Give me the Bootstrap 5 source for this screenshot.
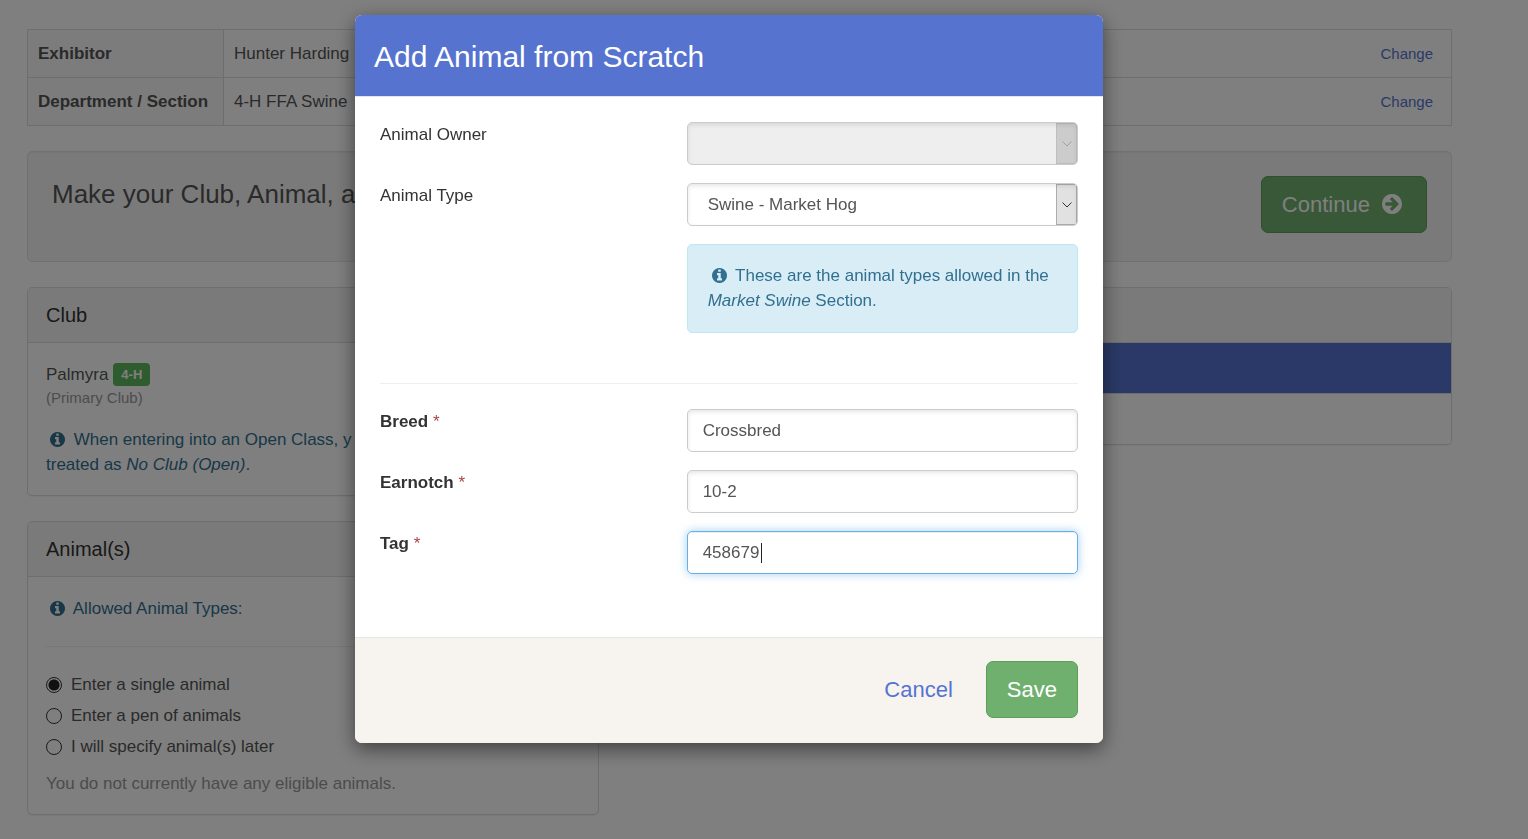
<!DOCTYPE html>
<html lang="en">
<head>
<meta charset="utf-8">
<meta name="viewport" content="width=device-width, initial-scale=1">
<title>Add Animal from Scratch</title>
<link href="https://cdn.jsdelivr.net/npm/bootstrap@5.3.0/dist/css/bootstrap.min.css" rel="stylesheet">
<style>
  :root { --brand: #5673d0; --line: #ddd; --info-ink: #31708f; }
  body { font-family: "Liberation Sans", Arial, sans-serif; font-size: 17px; line-height: 25px; color: #555; background: #fff; }
  a, .btn-link { color: var(--brand); text-decoration: none; }
  .page { padding: 29px 76px 24px 27px; }
  .row { --bs-gutter-x: 38px; }

  /* entry summary */
  .summary { --bs-table-color: #555; margin-bottom: 25px; border-color: var(--line); }
  .summary th, .summary td { padding: 11px 10px; vertical-align: middle; border-color: var(--line); white-space: nowrap; }
  .summary th { width: 196px; background: #f8f8f8; }
  .summary a { font-size: 15px; padding-right: 8px; }

  .well { margin-bottom: 25px; padding: 24px 24px 28px; border: 1px solid #e3e3e3; border-radius: 5px; background: #f5f5f5; box-shadow: inset 0 1px 1px rgba(0,0,0,.05); }
  .well h2 { margin: 0; font-size: 26px; line-height: 36px; }

  /* panels */
  .card { --bs-card-border-color: var(--line); --bs-card-border-radius: 5px; --bs-card-inner-border-radius: 4px; margin-bottom: 25px; box-shadow: 0 1px 1px rgba(0,0,0,.05); }
  .card-header { padding: 16px 18px; background: #f5f5f5; border-bottom-color: var(--line); color: #333; }
  .card-header h3 { margin: 0; min-height: 22px; font-size: 20px; line-height: 22px; }
  .card-body { padding: 19px 18px 18px; color: #555; }
  .list-group-item { min-height: 50px; border-color: var(--line); }
  .list-group-item.active { min-height: 51px; background: var(--brand); border-color: var(--line); margin-top: 0; }
  .card > .list-group { border-top: 0; }
  .club-name { display: flex; align-items: center; gap: 5px; height: 25px; }
  .club-badge { font-size: 13px; line-height: 13px; padding: 5px 8px; border-radius: 4px; background: #5cb85c; }
  .club-note { font-size: 15px; line-height: 22px; margin-bottom: 18px; color: #999; }
  .hint { color: var(--info-ink); }
  .hint svg { width: 15px; height: 15px; margin: 0 4px; vertical-align: -2px; }
  .rule { margin: 25px 0; border: 0; border-top: 1px solid #eee; opacity: 1; }
  .choice { display: flex; align-items: center; gap: 9px; margin-bottom: 6px; }
  .choice input { appearance: none; width: 16px; height: 16px; margin: 0; border: 1px solid #333; border-radius: 50%; background: #fff; }
  .choice input:checked { background: radial-gradient(circle, #222 5px, #fff 6px); }
  .none-note { margin: 12px 0 0; color: #999; }

  /* large buttons */
  .btn-lg { padding: 12px 20px; font-size: 22px; line-height: 31px; border-radius: 7px; }
  .btn-go { color: #fff; background: #70b06f; border: 1px solid #5a9e58; }
  .btn-go:hover { color: #fff; background: #5fa35e; }
  .btn-go svg { width: 20px; height: 20px; margin: 0 4px 0 6px; vertical-align: -2px; }

  /* dialog */
  .modal { padding-right: 70px; }
  .modal-dialog { max-width: 748px; margin-top: 15px; }
  .modal-content { border: 0; border-radius: 7px; box-shadow: 0 6px 19px rgba(0,0,0,.5); color: #333; }
  .modal-header { padding: 20px 19px 18px; background: var(--brand); border-bottom: 1px solid #e5e5e5; border-radius: 7px 7px 0 0; }
  .modal-title { font-size: 30px; line-height: 43px; color: #fff; }
  .modal-body { padding: 25px 25px 63px; }
  .modal-footer { padding: 23px 25px 25px; gap: 12px; background: #f7f3ee; border-top: 1px solid #e5e5e5; border-radius: 0 0 7px 7px; }
  .modal-footer > * { margin: 0; }
  .field { margin-bottom: 18px; }
  .field:last-child { margin-bottom: 0; }
  .required { color: #a94442; font-weight: 400; }
  .form-control, .form-select { height: 43px; padding: 8px 15px; border: 1px solid #ccc; border-radius: 5px; font-size: 17px; line-height: 25px; color: #555; box-shadow: inset 0 2px 4px rgba(0,0,0,.1); }
  .form-select { padding: 8px 30px 8px 20px; background-position: right center; background-size: 21px 41px;
    background-image: url("data:image/svg+xml,%3Csvg xmlns='http://www.w3.org/2000/svg' viewBox='0 0 21 41'%3E%3Crect x='.5' y='.5' width='20' height='40' fill='%23e1e1e1' stroke='%23adadad'/%3E%3Cpath d='M6.500 18.500l4.500 4.500 4.500-4.500' fill='none' stroke='%23333'/%3E%3C/svg%3E"); }
  .form-select:disabled { background-color: #eee; opacity: 1;
    background-image: url("data:image/svg+xml,%3Csvg xmlns='http://www.w3.org/2000/svg' viewBox='0 0 21 41'%3E%3Crect x='.5' y='.5' width='20' height='40' fill='%23ccc' stroke='%23bfbfbf'/%3E%3Cpath d='M6.500 18.500l4.500 4.500 4.500-4.500' fill='none' stroke='%23a0a0a0'/%3E%3C/svg%3E"); }
  .editing { border-color: #66afe9; box-shadow: inset 0 1px 1px rgba(0,0,0,.075), 0 0 10px rgba(102,175,233,.6);
    background: linear-gradient(#222, #222) 73px center / 1px 20px no-repeat #fff; }
  .alert-types { margin: 0; padding: 18px 20px 19px; border: 1px solid #bce8f1; border-radius: 5px; background: #d9edf7; }
  .dialog-rule { margin: 50px 0 25px; }
</style>
</head>
<body class="modal-open overflow-hidden">
<svg class="d-none" aria-hidden="true">
  <symbol id="info" viewBox="0 128 1536 1536"><path fill="currentColor" d="M1024 1376v-160q0-14-9-23t-23-9h-96V672q0-14-9-23t-23-9H544q-14 0-23 9t-9 23v160q0 14 9 23t23 9h96v320h-96q-14 0-23 9t-9 23v160q0 14 9 23t23 9h448q14 0 23-9t9-23zM896 480V320q0-14-9-23t-23-9H672q-14 0-23 9t-9 23v160q0 14 9 23t23 9h192q14 0 23-9t9-23zm640 416q0 209-103 385.500T1153.500 1561 768 1664t-385.500-103T103 1281.500 0 896t103-385.500T382.500 231 768 128t385.500 103T1433 510.500 1536 896z"/></symbol>
  <symbol id="arrow" viewBox="0 128 1536 1536"><path fill="currentColor" d="M1285 896q0-27-18-45l-91-91-362-362q-18-18-45-18t-45 18l-91 91q-18 18-18 45t18 45l189 189H320q-26 0-45 19t-19 45v128q0 26 19 45t45 19h502l-189 189q-19 19-19 45t19 45l91 91q18 18 45 18t45-18l362-362 91-91q18-18 18-45zm251 0q0 209-103 385.500T1153.500 1561 768 1664t-385.500-103T103 1281.500 0 896t103-385.500T382.500 231 768 128t385.500 103T1433 510.500 1536 896z"/></symbol>
</svg>

<main class="page container-fluid">
  <table class="table table-bordered summary">
    <tbody>
      <tr><th scope="row">Exhibitor</th><td class="border-end-0">Hunter Harding</td><td class="border-start-0 text-end"><a href="#">Change</a></td></tr>
      <tr><th scope="row">Department / Section</th><td class="border-end-0">4-H FFA Swine</td><td class="border-start-0 text-end"><a href="#">Change</a></td></tr>
    </tbody>
  </table>

  <section class="well d-flex justify-content-between align-items-start">
    <h2>Make your Club, Animal, a</h2>
    <button type="button" class="btn btn-lg btn-go">Continue <svg aria-hidden="true"><use href="#arrow"/></svg></button>
  </section>

  <div class="row">
    <div class="col-5">
      <section class="card">
        <div class="card-header"><h3>Club</h3></div>
        <div class="card-body">
          <div class="club-name">Palmyra <span class="badge club-badge">4-H</span></div>
          <div class="club-note">(Primary Club)</div>
          <div class="hint"><svg aria-hidden="true"><use href="#info"/></svg> When entering into an Open Class, y<br>treated as <em>No Club (Open)</em>.</div>
        </div>
      </section>
      <section class="card mb-0">
        <div class="card-header"><h3>Animal(s)</h3></div>
        <div class="card-body">
          <div class="hint"><svg aria-hidden="true"><use href="#info"/></svg> Allowed Animal Types:</div>
          <hr class="rule">
          <div class="choice"><input type="radio" name="mode" id="single" checked><label for="single">Enter a single animal</label></div>
          <div class="choice"><input type="radio" name="mode" id="pen"><label for="pen">Enter a pen of animals</label></div>
          <div class="choice"><input type="radio" name="mode" id="later"><label for="later">I will specify animal(s) later</label></div>
          <p class="none-note">You do not currently have any eligible animals.</p>
        </div>
      </section>
    </div>
    <div class="col-7">
      <section class="card">
        <div class="card-header"><h3></h3></div>
        <ul class="list-group list-group-flush">
          <li class="list-group-item active"></li>
          <li class="list-group-item"></li>
        </ul>
      </section>
    </div>
  </div>
</main>

<div class="modal-backdrop show"></div>
<div class="modal show d-block" tabindex="-1" role="dialog" aria-modal="true" aria-labelledby="dialogTitle">
  <div class="modal-dialog">
    <form class="modal-content">
      <div class="modal-header"><h1 class="modal-title" id="dialogTitle">Add Animal from Scratch</h1></div>
      <div class="modal-body">
        <div class="row field">
          <label class="col-5" for="owner">Animal Owner</label>
          <div class="col-7"><select class="form-select" id="owner" disabled><option></option></select></div>
        </div>
        <div class="row field">
          <label class="col-5" for="type">Animal Type</label>
          <div class="col-7"><select class="form-select" id="type"><option>Swine - Market Hog</option></select></div>
        </div>
        <div class="row">
          <div class="col-7 offset-5">
            <div class="alert alert-types hint"><svg aria-hidden="true"><use href="#info"/></svg> These are the animal types allowed in the <em>Market Swine</em> Section.</div>
          </div>
        </div>
        <hr class="rule dialog-rule">
        <div class="row field">
          <label class="col-5 fw-bold" for="breed">Breed <span class="required">*</span></label>
          <div class="col-7"><input type="text" class="form-control" id="breed" value="Crossbred"></div>
        </div>
        <div class="row field">
          <label class="col-5 fw-bold" for="earnotch">Earnotch <span class="required">*</span></label>
          <div class="col-7"><input type="text" class="form-control" id="earnotch" value="10-2"></div>
        </div>
        <div class="row field">
          <label class="col-5 fw-bold" for="tag">Tag <span class="required">*</span></label>
          <div class="col-7"><input type="text" class="form-control editing" id="tag" value="458679"></div>
        </div>
      </div>
      <div class="modal-footer">
        <button type="button" class="btn btn-lg btn-link text-decoration-none">Cancel</button>
        <button type="button" class="btn btn-lg btn-go">Save</button>
      </div>
    </form>
  </div>
</div>
<script src="https://cdn.jsdelivr.net/npm/bootstrap@5.3.0/dist/js/bootstrap.bundle.min.js"></script>
</body>
</html>
